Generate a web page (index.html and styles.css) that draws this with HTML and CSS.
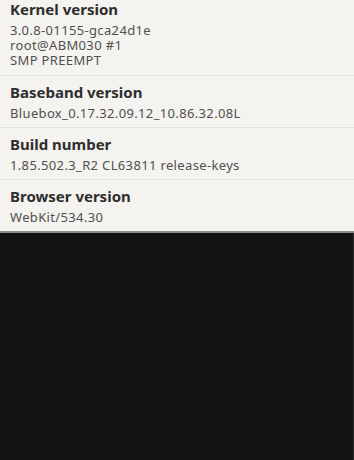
FILE: index.html
```html
<!DOCTYPE html>
<html>
<head>
<meta charset="utf-8">
<link rel="stylesheet" href="styles.css">
</head>
<body>
<div class="panel">
  <div class="list">
    <div class="item first">
      <div class="title">Kernel version</div>
      <div class="sub">3.0.8-01155-gca24d1e<br>root@ABM030 #1<br>SMP PREEMPT</div>
    </div>
    <div class="item">
      <div class="title">Baseband version</div>
      <div class="sub">Bluebox_0.17.32.09.12_10.86.32.08L</div>
    </div>
    <div class="item">
      <div class="title">Build number</div>
      <div class="sub">1.85.502.3_R2 CL63811 release-keys</div>
    </div>
    <div class="item">
      <div class="title">Browser version</div>
      <div class="sub">WebKit/534.30</div>
    </div>
  </div>
</div>
<div class="empty"></div>
</body>
</html>
```
FILE: styles.css
```css
html, body {
  margin: 0;
  padding: 0;
  height: 100%;
}
body {
  background: #131313;
  font-family: "Noto Sans", Roboto, sans-serif;
  overflow: hidden;
  display: flex;
  flex-direction: column;
}
.panel {
  background: #f4f3ef;
  border-bottom: 2px solid #8c8c89;
  overflow: hidden;
}
.list {
  margin-top: -10px;
}
.item {
  border-top: 1px solid #e2e1dc;
  padding: 6px 10px 6px;
}
.item.first {
  border-top: none;
  padding-top: 9px;
  padding-bottom: 7px;
}
.title {
  font-size: 15px;
  font-weight: bold;
  line-height: 20px;
  color: #2e2e2e;
}
.sub {
  margin-top: 4px;
  font-size: 13px;
  line-height: 15px;
  letter-spacing: 0.35px;
  color: #505050;
}
.empty {
  flex: 1;
  background: #131313;
  border-right: 1px solid #2a2a2a;
}
```
